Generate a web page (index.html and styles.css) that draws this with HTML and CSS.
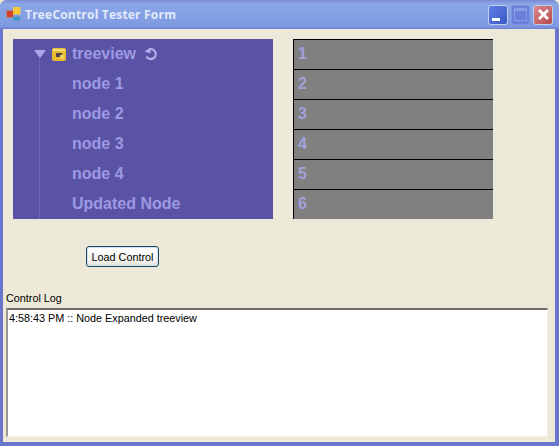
FILE: index.html
```html
<!DOCTYPE html>
<html lang="en">
<head>
    <meta charset="UTF-8">
    <title>TreeControl Tester Form</title>
    <link rel="stylesheet" href="styles.css">
</head>
<body>

<div class="window">
    <div class="titlebar">
        <svg class="app-icon" width="16" height="16" viewBox="0 0 16 16">
            <rect x="0.5" y="3.5" width="7" height="7" fill="#d8402a" stroke="#a08a90"/>
            <rect x="7" y="0" width="7.5" height="7.5" fill="#f6c83c"/>
            <rect x="7" y="9.5" width="7" height="4.5" fill="#3c9ac8" stroke="#8a9ac0" stroke-width="0.5"/>
        </svg>
        <span class="title">TreeControl Tester Form</span>
        <div class="caption-buttons">
            <div class="cap-btn cap-min"><span class="min-bar"></span></div>
            <div class="cap-btn cap-max"><span class="max-box"></span></div>
            <div class="cap-btn cap-close">
                <svg width="15" height="15" viewBox="0 0 15 15">
                    <path d="M3 3 L12 12 M12 3 L3 12" stroke="#fff" stroke-width="2.8" fill="none"/>
                </svg>
            </div>
        </div>
    </div>

    <div class="client">
        <div class="panels">
            <div class="tree">
                <div class="tree-row">
                    <svg class="arrow" width="12" height="8" viewBox="0 0 12 8"><path d="M0 0 H12 L6 8 Z" fill="#aaa8ee"/></svg>
                    <svg class="folder" width="14" height="13" viewBox="0 0 14 13">
                        <rect x="0" y="0" width="14" height="13" rx="2" fill="#e8bc2c"/>
                        <rect x="1" y="1" width="12" height="2" fill="#f8e078"/>
                        <rect x="4" y="5" width="6" height="4" fill="#4e4458"/>
                        <rect x="8" y="7" width="4" height="4" fill="#f4d060"/>
                    </svg>
                    <span class="label">treeview</span>
                    <svg class="refresh" width="15" height="14" viewBox="0 0 15 14">
                        <path d="M5.5 2.2 A5 5 0 1 1 2.4 9.5" stroke="#b4b2ee" stroke-width="2.2" fill="none"/>
                        <path d="M0.5 4.5 L6.5 0.5 L6.5 6.5 Z" fill="#b4b2ee"/>
                    </svg>
                </div>
                <div class="tree-row child"><span class="label">node 1</span></div>
                <div class="tree-row child"><span class="label">node 2</span></div>
                <div class="tree-row child"><span class="label">node 3</span></div>
                <div class="tree-row child"><span class="label">node 4</span></div>
                <div class="tree-row child"><span class="label">Updated Node</span></div>
            </div>
            <div class="grid">
                <div class="grid-row">1</div>
                <div class="grid-row">2</div>
                <div class="grid-row">3</div>
                <div class="grid-row">4</div>
                <div class="grid-row">5</div>
                <div class="grid-row">6</div>
            </div>
        </div>

        <button class="load-btn" type="button">Load Control</button>

        <div class="log-label">Control Log</div>
        <div class="log-box">4:58:43 PM :: Node Expanded treeview</div>
    </div>
</div>

</body>
</html>
```

FILE: styles.css
```css
html, body {
    margin: 0;
    padding: 0;
}
body {
    font-family: "Liberation Sans", Arial, sans-serif;
    background-color: #ece9d8;
    overflow: hidden;
}
.window {
    width: 559px;
    height: 446px;
    box-sizing: border-box;
    display: flex;
    flex-direction: column;
    background-color: #6a76cc;
    border-radius: 7px 7px 0 0;
    overflow: hidden;
}
.titlebar {
    height: 29px;
    flex: none;
    display: flex;
    align-items: center;
    padding: 0 6px 0 6px;
    background: linear-gradient(to bottom, #7b8ad6 0, #8ba6e6 4px, #84a0e4 16px, #7f9ae0 26px, #6f80d4 29px);
}
.app-icon {
    flex: none;
    margin-right: 3px;
}
.title {
    font-family: "Open Sans", Verdana, sans-serif;
    font-size: 12px;
    font-weight: 700;
    letter-spacing: 0.2px;
    color: #e2e9fa;
    flex: 1;
}
.caption-buttons {
    display: flex;
    gap: 3px;
}
.cap-btn {
    width: 20px;
    height: 20px;
    box-sizing: border-box;
    border: 1px solid #c2cdf0;
    border-radius: 3px;
    display: flex;
    align-items: center;
    justify-content: center;
}
.cap-min {
    background: linear-gradient(135deg, #5f7fe4, #3c58c4);
    align-items: flex-end;
    justify-content: flex-start;
    padding: 0 0 3px 3px;
}
.min-bar {
    width: 8px;
    height: 3px;
    background-color: #fff;
}
.cap-max {
    width: 19px;
    background-color: #6a80d8;
    border-color: #7f92e0;
}
.max-box {
    width: 11px;
    height: 9px;
    border: 1px solid #8a9ce4;
    border-top-width: 3px;
}
.cap-close {
    background: linear-gradient(135deg, #d88a90, #b8484a);
}
.client {
    flex: 1;
    margin: 0 4px 4px 3px;
    background-color: #ece9d8;
    display: flex;
    flex-direction: column;
    padding: 10px 7px 5px 3px;
}
.panels {
    display: flex;
    gap: 20px;
    margin-left: 7px;
}
.tree {
    width: 260px;
    height: 180px;
    background-color: #5a52a4;
    background-image: linear-gradient(#6a66b4, #6a66b4);
    background-size: 1px 162px;
    background-position: 26px 18px;
    background-repeat: no-repeat;
}
.tree-row {
    height: 30px;
    display: flex;
    align-items: center;
    padding-left: 59px;
}
.tree-row:first-child {
    padding-left: 21px;
}
.arrow {
    flex: none;
    margin-right: 6px;
}
.folder {
    flex: none;
    margin-right: 6px;
}
.label {
    font-size: 16px;
    font-weight: bold;
    color: #9c9ae2;
}
.refresh {
    flex: none;
    margin-left: 8px;
}
.grid {
    width: 200px;
    height: 180px;
    background-color: #808080;
    border-left: 1px solid #000;
    box-sizing: border-box;
}
.grid-row {
    height: 30px;
    box-sizing: border-box;
    border-top: 1px solid #000;
    padding-left: 4px;
    line-height: 28px;
    font-size: 16px;
    font-weight: bold;
    color: #a3a1dc;
}
.load-btn {
    width: 73px;
    height: 21px;
    margin: 27px 0 0 80px;
    align-self: flex-start;
    padding: 0;
    font-family: "Liberation Sans", Arial, sans-serif;
    font-size: 10.8px;
    color: #000;
    background: linear-gradient(to bottom, #fff, #f4f3ee 70%, #e2e0d6);
    border: 1px solid #1f4a5c;
    border-radius: 3px;
    box-shadow: inset 0 0 0 1px #cfe0f4;
}
.log-label {
    font-size: 10.8px;
    line-height: 13px;
    margin-top: 25px;
    color: #000;
}
.log-box {
    flex: 1;
    margin-top: 3px;
    box-sizing: border-box;
    background-color: #fff;
    border-top: 2px solid #716f64;
    border-left: 2px solid #9c9a8e;
    border-right: 1px solid #f4f2e8;
    border-bottom: 1px solid #f4f2e8;
    padding: 1px 1px;
    font-size: 10.8px;
    line-height: 14px;
    color: #000;
}
```
